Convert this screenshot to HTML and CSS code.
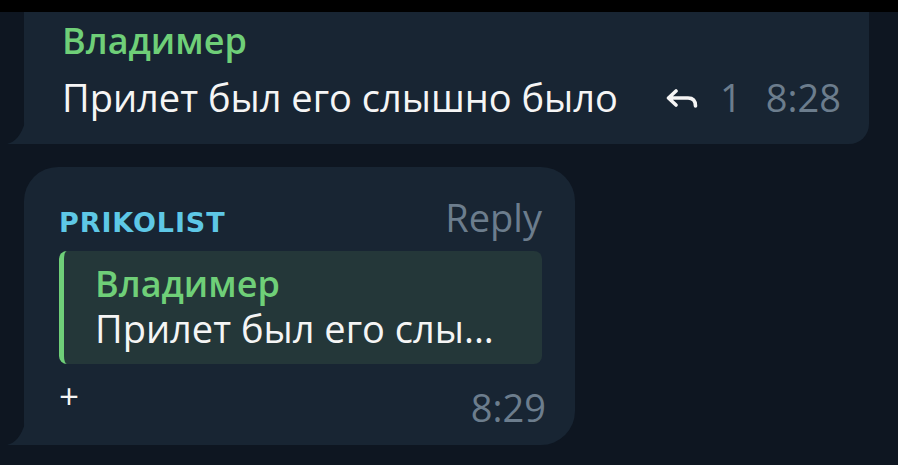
FILE: index.html
```html
<!DOCTYPE html>
<html lang="ru">
<head>
  <meta charset="UTF-8" />
  <title>Chat</title>
  <link rel="stylesheet" href="styles.css">
</head>
<body>
  <div class="topbar"></div>
  <div class="chat">
    <div class="bubble bubble-first">
      <div class="author green">Владимер</div>
      <div class="line">
        <span class="text">Прилет был его слышно было</span>
        <span class="meta">
          <svg class="reply-icon" width="32" height="19" viewBox="0 0 32 19">
            <path d="M10 2 L2.5 9 L10 16 M2.5 9 H22 C27 9 29.5 11.5 29.5 17" fill="none" stroke="currentColor" stroke-width="3.6" stroke-linecap="round" stroke-linejoin="round"/>
          </svg>
          <span class="count">1</span>
          <span class="time">8:28</span>
        </span>
      </div>
      <svg class="tail" width="18" height="22" viewBox="0 0 18 22"><path d="M18 0 V22 H0 C8 20 14 14 18 0 Z" fill="#182533"/></svg>
    </div>

    <div class="bubble bubble-second">
      <div class="head">
        <span class="author cyan">PRIKOLIST</span>
        <span class="reply-label">Reply</span>
      </div>
      <div class="quote">
        <div class="quote-name green">Владимер</div>
        <div class="quote-text">Прилет был его слы...</div>
      </div>
      <div class="foot">
        <span class="plus">+</span>
        <span class="time">8:29</span>
      </div>
      <svg class="tail" width="18" height="22" viewBox="0 0 18 22"><path d="M18 0 V22 H0 C8 20 14 14 18 0 Z" fill="#182533"/></svg>
    </div>
  </div>
</body>
</html>
```

FILE: styles.css
```css
* {
  box-sizing: border-box;
  margin: 0;
  padding: 0;
}

body {
  background-color: #0e1621;
  font-family: 'Open Sans', 'Noto Sans', sans-serif;
  color: #f5f5f5;
  height: 465px;
  overflow: hidden;
}

.topbar {
  height: 12px;
  background-color: #000;
}

.chat {
  display: flex;
  flex-direction: column;
  align-items: flex-start;
  gap: 23px;
  padding-left: 24px;
}

.bubble {
  position: relative;
  background-color: #182533;
}

.tail {
  position: absolute;
  left: -17px;
  bottom: 0;
}

.green {
  color: #6fcf78;
}

.cyan {
  color: #5ec8e6;
}

.time,
.count,
.reply-label {
  color: #6c7d8d;
}

/* first message */
.bubble-first {
  width: 845px;
  height: 132px;
  padding: 7px 28px 0 38px;
  border-radius: 0 0 20px 0;
}

.author {
  font-size: 36px;
  font-weight: 600;
  line-height: 44px;
}

.line {
  display: flex;
  margin-top: 4px;
}

.text {
  font-size: 38px;
  line-height: 60px;
}

.meta {
  margin-left: auto;
  display: flex;
  align-items: center;
  font-size: 38px;
  line-height: 60px;
}

.reply-icon {
  margin-top: 3px;
  margin-right: 22px;
}

.count {
  margin-right: 24px;
}

/* second message */
.bubble-second {
  width: 551px;
  height: 278px;
  padding: 24px 33px 0 35px;
  border-radius: 34px 34px 34px 0;
}

.head {
  display: flex;
  justify-content: space-between;
  align-items: baseline;
}

.head .author {
  font-size: 27px;
  font-weight: 700;
  letter-spacing: 0.9px;
  font-family: 'DejaVu Sans', sans-serif;
}

.reply-label {
  font-size: 38px;
  line-height: 52px;
}

.quote {
  margin-top: 6px;
  background-color: #243739;
  border-left: 5px solid #6fcf78;
  border-radius: 8px;
  padding: 11px 16px 14px 31px;
}

.quote-name {
  font-size: 36px;
  font-weight: 600;
  line-height: 44px;
}

.quote-text {
  font-size: 38px;
  line-height: 44px;
}

.foot {
  display: flex;
  justify-content: space-between;
  align-items: flex-start;
  padding-top: 12px;
}

.plus {
  font-size: 35px;
  line-height: 40px;
}

.foot .time {
  font-size: 38px;
  line-height: 52px;
  margin-top: 5px;
  margin-right: -4px;
}
```
